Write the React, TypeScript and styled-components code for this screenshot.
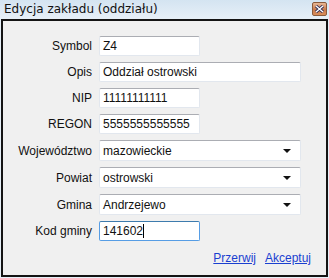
import styled, { createGlobalStyle } from 'styled-components'

const GlobalStyle = createGlobalStyle`
  html, body {
    margin: 0;
    padding: 0;
    background: #dfeaf3;
  }
  body {
    font-family: 'Liberation Sans', Arial, sans-serif;
    font-size: 12px;
  }
`

interface Field {
  label: string
  value: string
  kind: 'short' | 'long' | 'select'
  focused?: boolean
}

const fields: Field[] = [
  { label: 'Symbol', value: 'Z4', kind: 'short' },
  { label: 'Opis', value: 'Oddział ostrowski', kind: 'long' },
  { label: 'NIP', value: '11111111111', kind: 'short' },
  { label: 'REGON', value: '5555555555555', kind: 'short' },
  { label: 'Województwo', value: 'mazowieckie', kind: 'select' },
  { label: 'Powiat', value: 'ostrowski', kind: 'select' },
  { label: 'Gmina', value: 'Andrzejewo', kind: 'select' },
  { label: 'Kod gminy', value: '141602', kind: 'short', focused: true },
]

const App = () => {
  return (
    <Window>
      <GlobalStyle />
      <TitleBar>
        <Title>Edycja zakładu (oddziału)</Title>
        <CloseButton>
          <svg width="9" height="8" viewBox="0 0 9 8">
            <path d="M1 1 L8 7 M8 1 L1 7" stroke="#2a2a55" strokeWidth="3" />
            <path d="M1 1 L8 7 M8 1 L1 7" stroke="#ffffff" strokeWidth="1.4" />
          </svg>
        </CloseButton>
      </TitleBar>
      <Frame>
        <Form>
          {fields.map((field) => (
            <Row key={field.label}>
              <Label>{field.label}</Label>
              <Box $kind={field.kind} $focused={field.focused}>
                <Value>
                  {field.value}
                  {field.focused && <Caret />}
                </Value>
                {field.kind === 'select' && <Arrow />}
              </Box>
            </Row>
          ))}
        </Form>
        <Actions>
          <Link>Przerwij</Link>
          <Link>Akceptuj</Link>
        </Actions>
      </Frame>
    </Window>
  )
}

export default App

const Window = styled.div`
  display: flex;
  flex-direction: column;
  width: 329px;
  height: 278px;
  box-sizing: border-box;
  padding: 0 1px 1px 1px;
  background: linear-gradient(#d4e4f1, #e6eff7 18px);
`

const TitleBar = styled.div`
  display: flex;
  align-items: center;
  justify-content: space-between;
  height: 19px;
  padding: 0 1px 0 3px;
`

const Title = styled.div`
  font-family: 'DejaVu Sans', sans-serif;
  font-size: 12px;
  color: #111;
  margin-top: -1px;
`

const CloseButton = styled.div`
  display: flex;
  align-items: center;
  justify-content: center;
  width: 15px;
  height: 14px;
  margin-top: -2px;
  box-sizing: border-box;
  border: 1px solid #8a5a3a;
  border-radius: 2px;
  background: linear-gradient(#e8b896, #c87a4c 55%, #d88c5a);
`

const Frame = styled.div`
  flex: 1;
  display: flex;
  flex-direction: column;
  background: #f0f0f0;
  border: 2px solid #141414;
  padding: 15px 0 0 0;
`

const Form = styled.div`
  display: flex;
  flex-direction: column;
  gap: 6px;
`

const Row = styled.div`
  display: grid;
  grid-template-columns: 89px 1fr;
  column-gap: 7px;
  align-items: center;
`

const Label = styled.div`
  text-align: right;
  color: #111;
  font-size: 12px;
`

const Box = styled.div<{ $kind: 'short' | 'long' | 'select'; $focused?: boolean }>`
  display: flex;
  align-items: center;
  justify-content: space-between;
  box-sizing: border-box;
  width: ${(p) => (p.$kind === 'short' ? '101px' : '202px')};
  height: ${(p) => (p.$kind === 'select' ? '21px' : '20px')};
  padding: 0 9px 0 3px;
  background: #fff;
  border: 1px solid ${(p) => (p.$focused ? '#569de5' : '#e2e7ee')};
  border-top-color: ${(p) => (p.$focused ? '#3d7bad' : '#abadb3')};
  border-radius: 2px;
`

const Value = styled.span`
  display: flex;
  align-items: center;
  color: #111;
  font-size: 12px;
`

const Caret = styled.span`
  display: inline-block;
  width: 1px;
  height: 14px;
  background: #000;
`

const Arrow = styled.span`
  width: 0;
  height: 0;
  border-left: 4px solid transparent;
  border-right: 4px solid transparent;
  border-top: 4px solid #111;
`

const Actions = styled.div`
  display: flex;
  justify-content: flex-end;
  gap: 9px;
  padding: 10px 15px 0 0;
`

const Link = styled.a`
  color: #1a3fd0;
  text-decoration: underline;
  font-size: 12px;
  cursor: pointer;
`
